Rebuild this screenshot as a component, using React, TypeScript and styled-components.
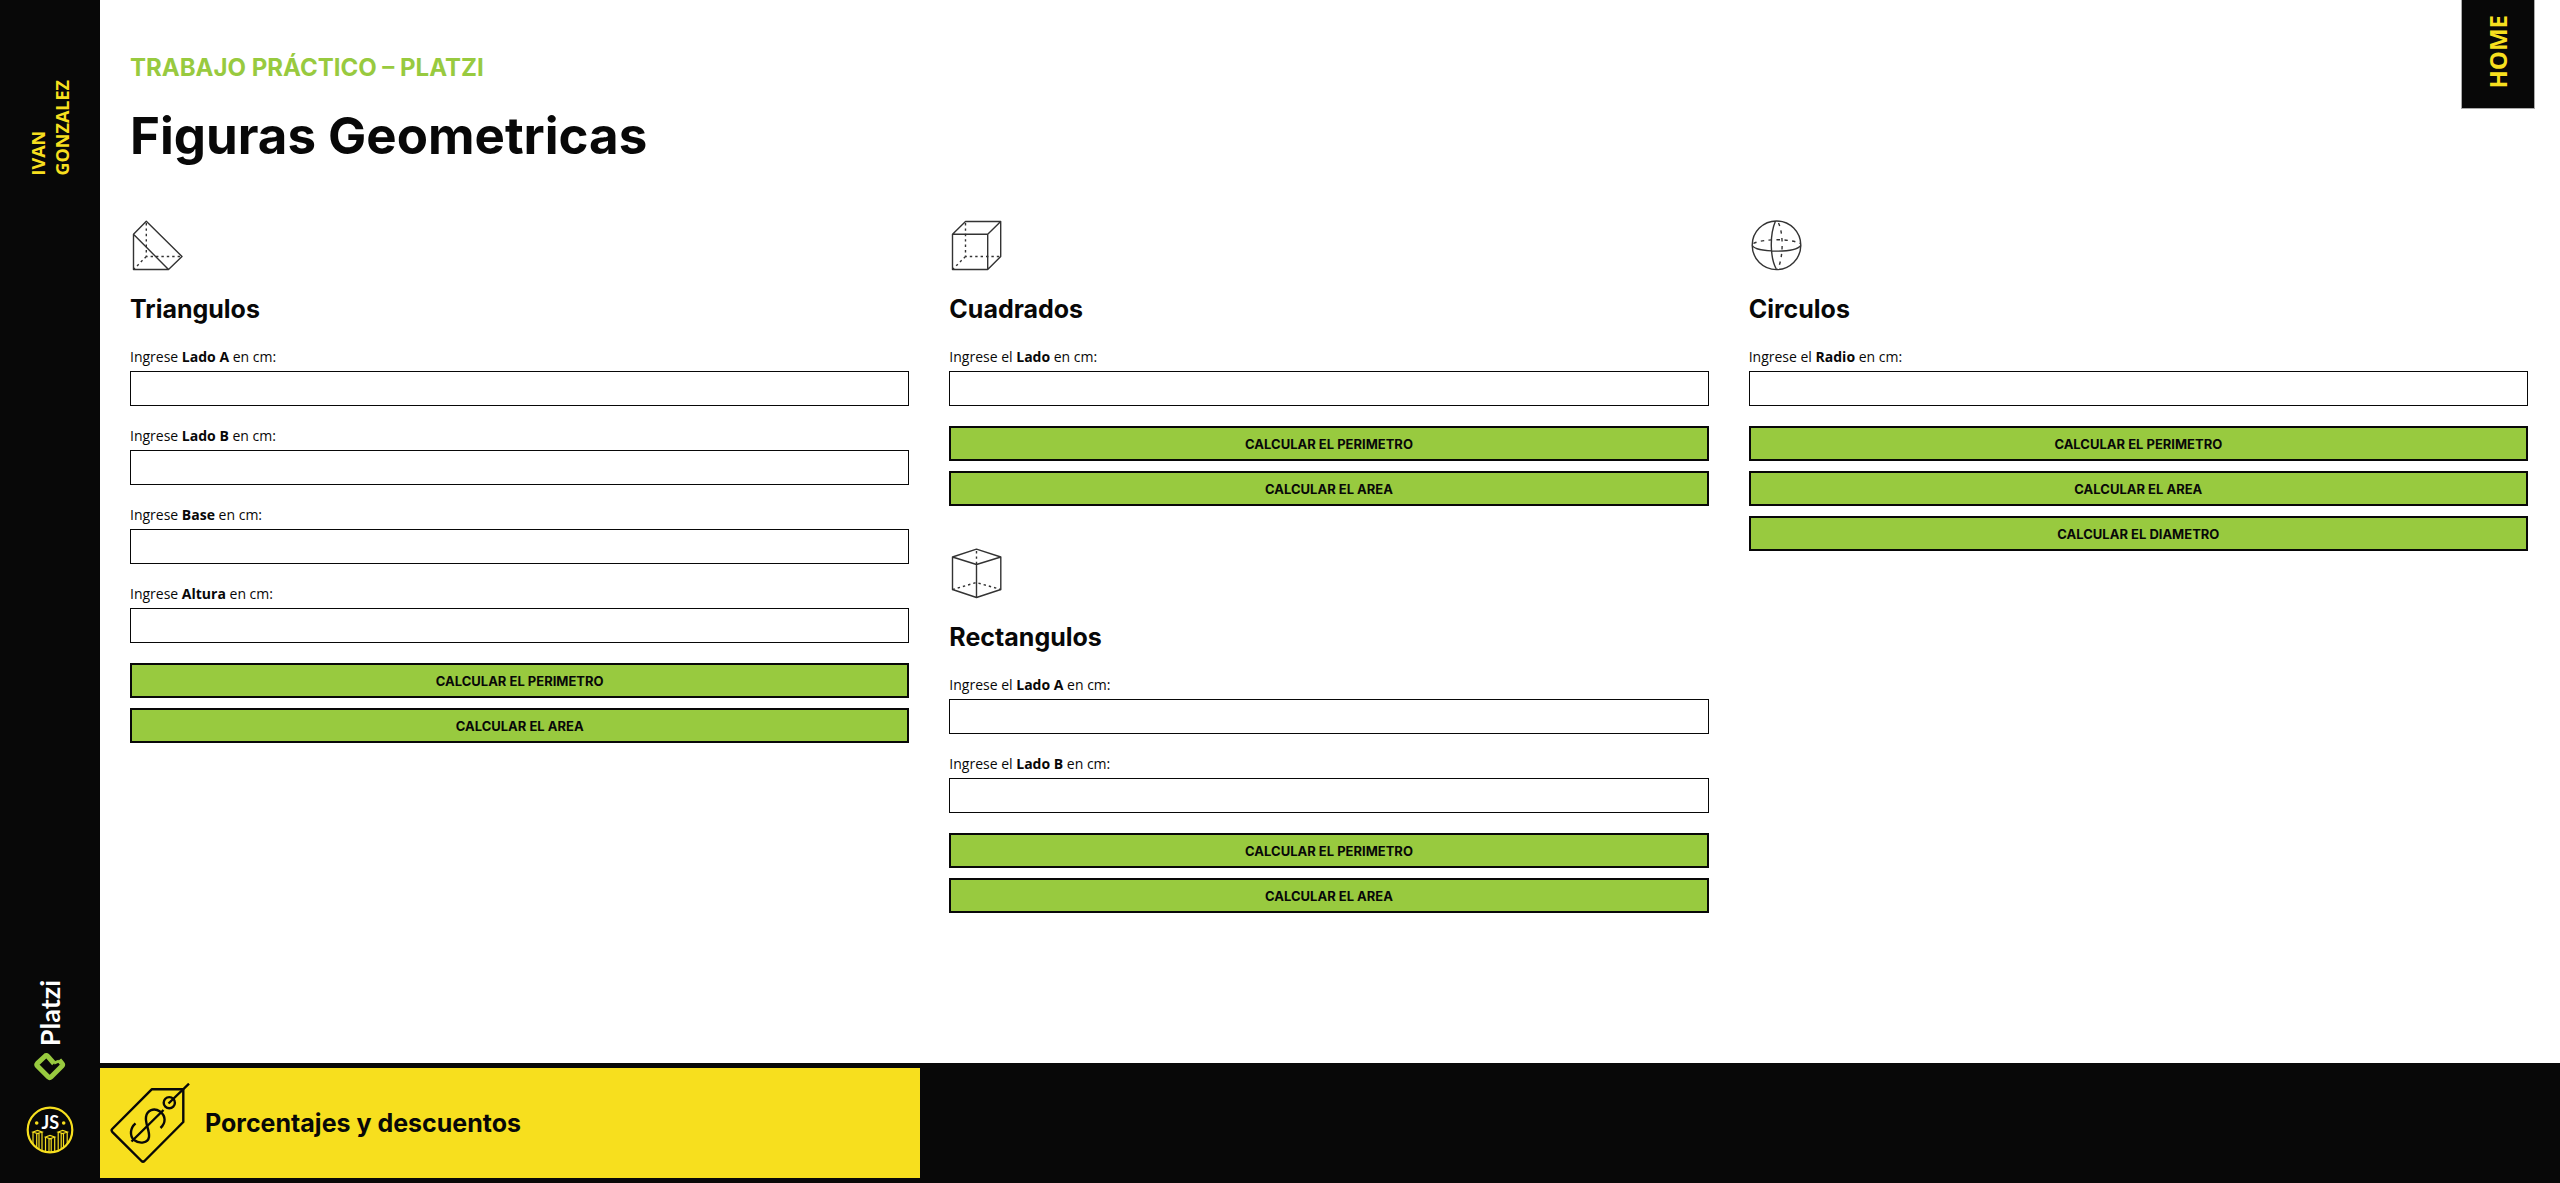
import React from "react";
import styled, { createGlobalStyle } from "styled-components";

const ink = "#080808";
const green = "#98ca3f";
const yellow = "#f7df1e";
const heading = `Inter, "Open Sans", sans-serif`;
const body = `"Open Sans", "Noto Sans", sans-serif`;

const GlobalStyle = createGlobalStyle`
  *, *::before, *::after { box-sizing: border-box; }
  body { margin: 0; background: #fff; color: ${ink}; font-family: ${body}; }
  h1, h2, p { margin: 0; }
  a { color: inherit; text-decoration: none; }
`;

const Page = styled.div`
  display: grid;
  grid-template-columns: 100px 1fr;
  min-height: 100vh;
`;

const Sidebar = styled.aside`
  display: flex;
  flex-direction: column;
  align-items: center;
  justify-content: space-between;
  padding: 80px 0 29px;
  background: ${ink};
`;

const Author = styled.p`
  width: 48px;
  writing-mode: vertical-rl;
  transform: rotate(180deg);
  color: ${yellow};
  font-size: 18px;
  font-weight: 700;
  line-height: 24px;
`;

const Logos = styled.div`
  display: flex;
  flex-direction: column;
  align-items: center;
`;

const Platzi = styled.a`
  display: flex;
  flex-direction: column;
  align-items: center;
  gap: 5px;
  margin-bottom: 25px;
`;

const PlatziName = styled.span`
  writing-mode: vertical-rl;
  transform: rotate(180deg);
  color: #fff;
  font-family: Lato, sans-serif;
  font-size: 27px;
  font-weight: 700;
  line-height: 32px;
`;

const Content = styled.div`
  display: flex;
  flex-direction: column;
  min-width: 0;
`;

const Main = styled.main`
  flex: 1;
  padding: 50px 32px 40px 30px;
`;

const Kicker = styled.p`
  color: ${green};
  font-family: ${heading};
  font-size: 24px;
  font-weight: 700;
  line-height: 36px;
`;

const Title = styled.h1`
  margin-top: 14px;
  font-family: ${heading};
  font-size: 51px;
  font-weight: 700;
  line-height: 72px;
`;

const Columns = styled.div`
  display: grid;
  grid-template-columns: 779fr 759fr 779fr;
  gap: 40px;
  align-items: start;
  margin-top: 46px;
`;

const Column = styled.div`
  display: flex;
  flex-direction: column;
  gap: 40px;
`;

const Card = styled.section`
  display: flex;
  flex-direction: column;
`;

const FigureIcon = styled.svg`
  width: 55px;
  height: 55px;
  fill: none;
  stroke: #333;
  stroke-width: 1.4;
  stroke-linejoin: round;
`;

const CardTitle = styled.h2`
  margin: 18px 0 20px;
  font-family: ${heading};
  font-size: 25px;
  font-weight: 700;
  line-height: 36px;
`;

const Form = styled.form`
  display: flex;
  flex-direction: column;
  gap: 10px;
`;

const Field = styled.div`
  display: flex;
  flex-direction: column;
  gap: 4px;
  padding-bottom: 10px;
`;

const Label = styled.label`
  font-size: 14px;
  font-weight: 400;
  line-height: 20px;

  strong { font-weight: 700; }
`;

const Input = styled.input`
  width: 100%;
  height: 35px;
  padding: 0 10px;
  border: 1px solid ${ink};
  background: #fff;
  font-family: ${body};
  font-size: 14px;
`;

const Button = styled.button`
  height: 35px;
  padding: 0;
  border: 2px solid ${ink};
  background: ${green};
  color: ${ink};
  font-family: ${heading};
  font-size: 13px;
  font-weight: 700;
  text-transform: uppercase;
`;

const Footer = styled.footer`
  display: grid;
  grid-template-columns: repeat(3, 1fr);
  border: solid ${ink};
  border-width: 5px 0;
  background: ${ink};
`;

const Tile = styled.a`
  display: flex;
  align-items: center;
  gap: 15px;
  height: 110px;
  padding: 0 10px;
  background: ${yellow};
  font-family: ${heading};
  font-size: 25px;
  font-weight: 700;
`;

const HomeTab = styled.a`
  position: fixed;
  top: 0;
  right: 25px;
  display: flex;
  align-items: center;
  justify-content: center;
  width: 74px;
  height: 109px;
  padding-bottom: 5px;
  border: 1px solid #aaa;
  border-top: 0;
  background: ${ink};
  color: ${yellow};

  span {
    writing-mode: vertical-rl;
    transform: rotate(180deg);
    font-size: 24px;
    font-weight: 700;
    line-height: 32px;
  }
`;

const dots = "2.4 3";

const figures = {
  triangle: (
    <>
      <path d="M3.5 16.3 16.3 3.2 52 38.5 38.5 51.5H3.5zL38.5 51.5" />
      <path d="M16.3 5V38.5H52M16.3 38.5 3.5 51.5" strokeDasharray={dots} />
    </>
  ),
  cube: (
    <>
      <path d="M3.5 16.3H38.7V51.5H3.5zL16.5 3.5H51.7V38.5L38.7 51.5M38.7 16.3 51.7 3.5" />
      <path d="M16.5 5V38.5H51.7M16.5 38.5 3.5 51.5" strokeDasharray={dots} />
    </>
  ),
  sphere: (
    <>
      <circle cx="27.5" cy="27.3" r="24.3" />
      <path d="M26.5 3C20.5 17 21 40 27.5 51.5M3.3 27.5C8 35 46 35 51.8 27.5" />
      <path d="M29.5 5C34.5 15 34.5 40 28.5 51.5M4.5 25.5C14 20.5 42 20.5 51 25.5" strokeDasharray="3.4 4.4" />
    </>
  ),
  prism: (
    <>
      <path d="M3.5 11 27.5 3.2 51.8 11V43.5L27.5 51.5 3.5 43.5zL27.5 18.5 51.8 11M27.5 18.5V51.5" />
      <path d="M27.5 5V18M3.5 43.5 27.5 36.5 51.8 43.5" strokeDasharray={dots} />
    </>
  ),
};

type FieldSpec = { prefix: string; name: string };

type FigureProps = {
  id: string;
  title: string;
  icon: keyof typeof figures;
  fields: FieldSpec[];
  actions: string[];
};

function Figure({ id, title, icon, fields, actions }: FigureProps) {
  return (
    <Card>
      <FigureIcon viewBox="0 0 55 55" aria-hidden="true">{figures[icon]}</FigureIcon>
      <CardTitle>{title}</CardTitle>
      <Form>
        {fields.map((field, i) => (
          <Field key={field.name}>
            <Label htmlFor={`${id}-${i}`}>
              {field.prefix} <strong>{field.name}</strong> en cm:
            </Label>
            <Input id={`${id}-${i}`} type="text" />
          </Field>
        ))}
        {actions.map((action) => (
          <Button key={action} type="button">Calcular el {action}</Button>
        ))}
      </Form>
    </Card>
  );
}

export default function App() {
  return (
    <Page>
      <GlobalStyle />
      <Sidebar>
        <Author>IVAN<br />GONZALEZ</Author>
        <Logos>
          <Platzi href="#platzi">
            <PlatziName>Platzi</PlatziName>
            <svg width="34" height="30" viewBox="0 0 34 30" fill="none" stroke={green} strokeWidth="5" strokeLinejoin="round" aria-hidden="true">
              <path d="M21 12.5 14.6 5.2Q13.3 3.8 12 5.2L4.4 12.4Q3.2 13.7 4.4 15L15.4 26Q16.7 27.2 18 26L29 15Q30.2 13.7 29 12.4L26.2 9" />
              <path d="M21 12.2 26 10" strokeWidth="3" />
            </svg>
          </Platzi>
          <svg width="48" height="48" viewBox="0 0 48 48" fill="none" stroke={yellow} role="img" aria-label="JS">
            <circle cx="24" cy="24" r="22.3" strokeWidth="2.2" />
            <path d="M7 38V26M10.7 42V27.5M13 43.5V27.5M16 44.5V26M19.5 46V31M23 46V33M25.2 46V33M28.7 46V31M32.2 44.5V26M35.2 43.5V27.5M37.5 42V27.5M41.2 38V26M7 26 11.5 24.5 16 26 11.5 27.5zM19.5 31 24 29.5 28.7 31 24 32.8zM32.2 26 36.7 24.5 41.2 26 36.7 27.5z" strokeWidth="1.2" />
            <circle cx="10.7" cy="17" r="1.8" fill={yellow} stroke="none" />
            <circle cx="37.7" cy="17" r="1.8" fill={yellow} stroke="none" />
            <text x="24.3" y="23.2" textAnchor="middle" fill="#fff" stroke="none" fontFamily="Lato, sans-serif" fontWeight="700" fontSize="18">JS</text>
          </svg>
        </Logos>
      </Sidebar>
      <Content>
        <Main>
          <Kicker>TRABAJO PRÁCTICO – PLATZI</Kicker>
          <Title>Figuras Geometricas</Title>
          <Columns>
            <Column>
              <Figure
                id="triangulo"
                title="Triangulos"
                icon="triangle"
                fields={[
                  { prefix: "Ingrese", name: "Lado A" },
                  { prefix: "Ingrese", name: "Lado B" },
                  { prefix: "Ingrese", name: "Base" },
                  { prefix: "Ingrese", name: "Altura" },
                ]}
                actions={["perimetro", "area"]}
              />
            </Column>
            <Column>
              <Figure
                id="cuadrado"
                title="Cuadrados"
                icon="cube"
                fields={[{ prefix: "Ingrese el", name: "Lado" }]}
                actions={["perimetro", "area"]}
              />
              <Figure
                id="rectangulo"
                title="Rectangulos"
                icon="prism"
                fields={[
                  { prefix: "Ingrese el", name: "Lado A" },
                  { prefix: "Ingrese el", name: "Lado B" },
                ]}
                actions={["perimetro", "area"]}
              />
            </Column>
            <Column>
              <Figure
                id="circulo"
                title="Circulos"
                icon="sphere"
                fields={[{ prefix: "Ingrese el", name: "Radio" }]}
                actions={["perimetro", "area", "diametro"]}
              />
            </Column>
          </Columns>
        </Main>
        <Footer>
          <Tile href="#porcentajes">
            <svg width="80" height="80" viewBox="0 0 80 80" fill="none" stroke={ink} strokeWidth="2.4" strokeLinejoin="round" aria-hidden="true">
              <path d="M41.7 6.3H73.3V39L34.5 78Q33 79.3 31.5 78L2.2 48.8Q1 47.3 2.2 46z" />
              <circle cx="59.3" cy="19.7" r="5.6" />
              <path d="M58.5 20.5 79 .7M21.5 58.5 53.5 27" />
              <path d="M25.5 40.3C20 45 19.5 53 24 57 30 61.5 38 60 39 54 40 48 35 41 36 34 37 27 44 24.5 50 28.5 56 33 56 40 50.5 45" />
            </svg>
            Porcentajes y descuentos
          </Tile>
        </Footer>
      </Content>
      <HomeTab href="#home"><span>HOME</span></HomeTab>
    </Page>
  );
}
